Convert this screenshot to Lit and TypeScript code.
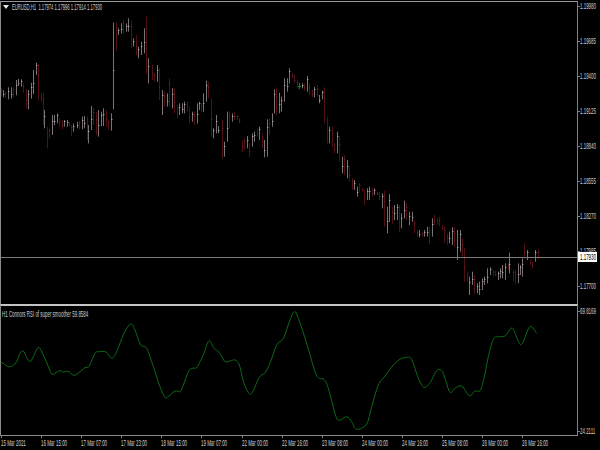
import { LitElement, html, css, svg } from "lit";
import { customElement } from "lit/decorators.js";

// Bars are read from the reference in 3x crop units: "x top bottom colour".
const SEGMENTS: { dx: number; data: string }[] = [
  { dx: 0, data: `3 265 290 r,10 270 292 w,16 275 295 r,24 262 298 w,33 262 296 w,40 262 292 r,48 240 286 w,55 237 258 w,62 238 260 w,70 250 278 r,78 268 325 r,85 270 328 w,93 248 296 w,100 210 282 w,108 188 225 w,115 193 302 r,122 280 305 r,128 278 375 r,132 330 385 w,140 380 445 r,147 385 415 r,155 345 405 w,162 345 375 w,170 340 370 w,177 355 380 r,185 360 388 r,192 360 380 w,200 360 380 w,207 365 380 r,214 375 408 r,220 370 395 w,230 365 385 w,238 362 390 r,245 350 388 w,252 348 385 w,260 350 420 r,265 375 430 w,272 318 390 w,280 325 375 r,288 335 405 r,295 330 410 w,302 335 378 w,310 325 378 w,317 330 380 r,325 360 390 r,332 340 392 w,340 68 328 w,348 65 152 r,355 85 105 w,362 70 100 w,370 58 102 r,378 70 95 w,385 55 95 w,393 62 145 r,400 115 140 w,408 105 165 r,415 140 175 w,423 125 165 w,431 85 160 w,439 50 222 r,445 175 250 w,455 195 240 r,463 220 245 r,470 195 245 w,477 205 300 r,485 270 345 w,492 275 320 r,500 280 320 w,507 235 320 r,515 265 325 w,522 265 340 r,530 315 355 r,537 310 345 w,545 310 340 w,552 305 340 w,560 305 335 r,568 320 370 r,575 335 365 w,582 335 375 r,590 310 370 w,597 305 330 w` },
  { dx: 600, data: `3 310 338 r,10 280 335 w,18 242 305 w,25 245 295 r,33 295 410 r,40 385 415 w,48 345 400 w,55 378 400 w,65 360 475 r,72 425 470 w,80 335 425 w,87 335 385 r,95 340 365 w,103 335 360 r,110 345 360 r,117 355 370 r,125 420 455 r,132 415 450 r,140 408 445 w,148 430 472 r,155 400 440 w,163 395 425 w,170 385 410 r,178 380 420 w,185 400 445 r,193 420 472 w,200 358 470 w,208 355 405 r,215 340 380 w,222 268 340 w,229 262 345 r,236 278 340 w,243 290 335 w,253 235 305 w,260 235 275 w,268 205 250 w,275 220 235 r,283 225 250 r,290 240 265 r,305 250 265 w,313 250 272 r,320 228 275 w,328 250 285 r,335 270 292 r,343 260 292 w,350 255 290 r,358 285 310 w,365 272 298 w,373 262 370 r,380 350 430 r,388 380 430 w,395 380 440 r,403 430 460 r,410 395 460 w,417 410 485 r,425 470 520 w,432 465 525 r,440 480 535 w,448 500 545 r,455 535 570 r,463 540 570 w,470 560 590 w,478 550 575 r,485 565 575 r,493 570 615 r,500 565 600 w,508 560 600 w,515 565 590 r,523 565 585 w,530 575 585 r,537 575 600 r,545 580 625 w,553 572 680 r,560 620 700 w,568 582 665 w,575 620 670 r,583 615 660 w,590 612 660 w,598 615 695 r` },
  { dx: 1200, data: `3 640 685 w,11 602 655 w,18 610 660 r,28 635 675 w,35 635 665 w,43 660 700 r,50 690 710 r,57 690 712 w,65 695 710 r,72 690 710 w,80 680 710 w,87 680 732 r,95 655 710 w,103 645 675 r,110 655 675 r,118 650 680 r,125 675 690 r,133 680 730 r,140 700 735 r,148 695 730 w,155 682 735 w,163 682 740 r,172 690 780 w,180 690 755 w,187 715 770 r,193 745 845 r,200 815 845 r,207 830 885 w,215 815 855 w,222 825 880 r,230 850 880 w,237 845 885 w,245 835 870 w,253 830 855 w,262 805 850 w,270 802 825 w,278 810 828 r,285 812 828 r,293 815 840 w,300 805 835 w,307 795 835 w,315 790 840 w,323 790 810 r,328 758 820 w,338 810 845 r,345 810 852 r,353 790 850 w,360 795 825 w,367 775 830 w,373 730 775 r,381 750 780 w,390 780 795 r,397 785 805 r,405 750 785 w,413 748 778 r` },
];

type Bar = { x: number; y0: number; y1: number; up: boolean; k: number };
const BARS: Bar[] = SEGMENTS.flatMap((s) =>
  s.data.split(",").map((row, k) => {
    const [x, a, b, c] = row.trim().split(" ");
    return { x: (s.dx + +x) / 3, y0: +a / 3, y1: +b / 3, up: c === "w", k };
  })
);

// Oscillator path, same crop units; y is measured from the top of the lower pane crop (300).
const RSI_RAW = `0 185,10 190,25 200,38 197,50 185,60 160,70 153,80 172,90 185,100 170,115 142,130 165,145 200,155 222,165 220,178 212,190 216,205 214,222 226,240 215,255 203,268 198,285 160,300 155,318 156,335 175,350 155,372 100,392 72,405 90,422 135,440 145,460 200,480 260,495 292,505 290,525 273,540 275,550 255,565 215,575 205,590 203,600 185,612 160,627 122,642 145,658 158,675 185,690 183,705 180,718 195,732 250,748 281,758 275,778 232,795 218,810 190,830 135,850 115,870 60,883 35,895 55,920 130,945 215,958 235,972 238,985 265,1008 350,1020 360,1040 350,1055 365,1070 388,1100 372,1115 320,1135 255,1155 228,1180 195,1200 178,1220 172,1235 178,1255 235,1272 262,1290 248,1310 212,1325 212,1335 235,1350 277,1365 265,1385 258,1408 287,1425 273,1440 272,1452 235,1465 170,1480 118,1495 110,1515 108,1535 84,1545 100,1558 130,1568 128,1590 80,1610 100`;
const RSI = RSI_RAW.split(",").map((p) => {
  const [x, y] = p.split(" ").map(Number);
  return [x / 3, y / 3] as [number, number];
});

function smooth(pts: [number, number][]): string {
  let d = `M${pts[0][0]} ${pts[0][1]}`;
  for (let i = 0; i < pts.length - 1; i++) {
    const p0 = pts[Math.max(0, i - 1)];
    const p1 = pts[i];
    const p2 = pts[i + 1];
    const p3 = pts[Math.min(pts.length - 1, i + 2)];
    const c1 = [p1[0] + (p2[0] - p0[0]) / 6, p1[1] + (p2[1] - p0[1]) / 6];
    const c2 = [p2[0] - (p3[0] - p1[0]) / 6, p2[1] - (p3[1] - p1[1]) / 6];
    d += `C${c1[0].toFixed(2)} ${c1[1].toFixed(2)} ${c2[0].toFixed(2)} ${c2[1].toFixed(2)} ${p2[0].toFixed(2)} ${p2[1].toFixed(2)}`;
  }
  return d;
}

const PRICES = ["1.19980", "1.19685", "1.19400", "1.19125", "1.18840", "1.18555", "1.18270", "1.17985", "1.17700"];
const TIMES = ["15 Mar 2021", "16 Mar 15:00", "17 Mar 07:00", "17 Mar 23:00", "18 Mar 15:00", "19 Mar 07:00", "22 Mar 00:00", "22 Mar 16:00", "23 Mar 08:00", "24 Mar 00:00", "24 Mar 16:00", "25 Mar 08:00", "26 Mar 00:00", "26 Mar 16:00"];

@customElement("app-root")
export class AppRoot extends LitElement {
  static styles = css`
    :host {
      display: block;
      width: 600px;
      height: 450px;
      background: #000;
      overflow: hidden;
      font-family: "Liberation Sans", Arial, sans-serif;
      font-size: 8.5px;
      line-height: 8px;
      color: #cfcfcf;
    }
    .root {
      display: grid;
      grid-template-columns: 578px 22px;
      grid-template-rows: 303px 132px 15px;
      padding-top: 1px;
      height: 450px;
      box-sizing: border-box;
    }
    .pane {
      position: relative;
      box-sizing: border-box;
      border-left: 1px solid #8a8a8a;
      border-right: 1px solid #808080;
    }
    .main { border-top: 1px solid #9a9a9a; }
    .sub { border-top: 2px solid #c4c4c4; border-bottom: 1px solid #8a8a8a; }
    svg { display: block; }
    .t {
      display: inline-block;
      white-space: nowrap;
      transform: scaleX(0.52);
      transform-origin: left center;
    }
    .caption {
      position: absolute;
      left: 7px;
      top: 1px;
      display: flex;
      align-items: center;
      gap: 3px;
    }
    .main .caption .t { transform: scaleX(0.49); }
    .sub .caption { left: 1px; top: 4px; }
    .tri {
      width: 0;
      height: 0;
      border-left: 3px solid transparent;
      border-right: 3px solid transparent;
      border-top: 4px solid #e8e8e8;
      margin-left: -5px;
    }
    .axis {
      position: relative;
      display: flex;
      flex-direction: column;
      gap: 27px;
      padding-top: 1px;
    }
    .axis.sub-axis { justify-content: space-between; padding: 3px 0 1px; }
    .row { display: flex; align-items: center; height: 8px; }
    .tick { width: 2px; height: 1px; background: #808080; flex: none; }
    .tag {
      position: absolute;
      left: 0;
      top: 251px;
      width: 19px;
      height: 10px;
      background: #fff;
      color: #000;
      display: flex;
      align-items: center;
      padding-left: 2px;
      box-sizing: border-box;
    }
    .times { display: flex; padding-left: 1px; }
    .cell { width: 40.1px; flex: none; position: relative; height: 15px; }
    .cell::before {
      content: "";
      position: absolute;
      left: 0;
      top: 0;
      width: 1px;
      height: 2px;
      background: #808080;
    }
    .cell .t { position: absolute; left: 0; top: 3px; }
  `;

  render() {
    const bars = BARS.map((b) => {
      const x = Math.round(b.x) + 0.5;
      const tickY = Math.round(b.y0 + (b.y1 - b.y0) * (b.k % 3 === 0 ? 0.3 : b.k % 3 === 1 ? 0.55 : 0.2)) + 0.5;
      return svg`<line x1=${x} x2=${x} y1=${b.y0} y2=${b.y1} stroke=${b.up ? "#7a7175" : "#521015"} stroke-width="1"></line>
        <line x1=${x - 0.5} x2=${x + 0.9} y1=${tickY} y2=${tickY} stroke=${b.up ? "#a8a4a6" : "#5e2024"} stroke-width="1"></line>`;
    });
    return html`<div class="root">
      <div class="pane main">
        <svg width="576" height="301" viewBox="1 2 576 301">
          ${bars}
          <line x1="299.5" x2="299.5" y1="83" y2="89" stroke="#0b8a12"></line>
          <line x1="298" x2="301" y1="86.5" y2="86.5" stroke="#0b8a12"></line>
          <line x1="1" x2="577" y1="257.5" y2="257.5" stroke="#7c7c7c"></line>
        </svg>
        <div class="caption"><span class="tri"></span><span class="t">EURUSD,H1&nbsp; 1.17974 1.17996 1.17914 1.17930</span></div>
      </div>
      <div class="axis">
        ${PRICES.map((p) => html`<div class="row"><span class="tick"></span><span class="t">${p}</span></div>`)}
        <div class="tag"><span class="t">1.17930</span></div>
      </div>
      <div class="pane sub">
        <svg width="576" height="129" viewBox="1 306 576 129">
          <path d=${smooth(RSI.map(([x, y]) => [x, y + 300] as [number, number]))} fill="none" stroke="#0f7d16" stroke-width="0.85"></path>
        </svg>
        <div class="caption"><span class="t">H1 Connors RSI of super smoother 59.8584</span></div>
      </div>
      <div class="axis sub-axis">
        <div class="row"><span class="tick"></span><span class="t">69.8169</span></div>
        <div class="row"><span class="tick"></span><span class="t">24.2111</span></div>
      </div>
      <div class="times">
        ${TIMES.map((t) => html`<div class="cell"><span class="t">${t}</span></div>`)}
      </div>
      <div></div>
    </div>`;
  }
}
